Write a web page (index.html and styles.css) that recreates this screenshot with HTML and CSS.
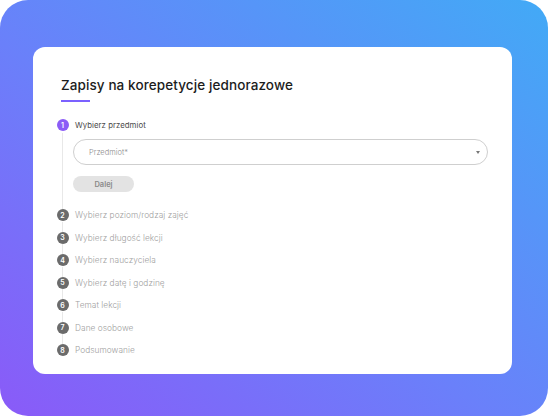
FILE: index.html
```html
<!DOCTYPE html>
<html lang="pl">
<head>
<meta charset="utf-8">
<link rel="stylesheet" href="styles.css">
</head>
<body>
<div class="frame">
  <div class="card">
    <h1 class="title">Zapisy na korepetycje jednorazowe</h1>
    <div class="title-bar"></div>
    <ol class="steps">
      <li class="step active">
        <div class="step-head"><span class="num">1</span><span class="label">Wybierz przedmiot</span></div>
        <div class="step-body">
          <div class="select">
            <span class="placeholder">Przedmiot*</span>
            <span class="caret"></span>
          </div>
          <button class="btn">Dalej</button>
        </div>
      </li>
      <li class="step"><div class="step-head"><span class="num">2</span><span class="label">Wybierz poziom/rodzaj zajęć</span></div><div class="connector"></div></li>
      <li class="step"><div class="step-head"><span class="num">3</span><span class="label">Wybierz długość lekcji</span></div><div class="connector"></div></li>
      <li class="step"><div class="step-head"><span class="num">4</span><span class="label">Wybierz nauczyciela</span></div><div class="connector"></div></li>
      <li class="step"><div class="step-head"><span class="num">5</span><span class="label">Wybierz datę i godzinę</span></div><div class="connector"></div></li>
      <li class="step"><div class="step-head"><span class="num">6</span><span class="label">Temat lekcji</span></div><div class="connector"></div></li>
      <li class="step"><div class="step-head"><span class="num">7</span><span class="label">Dane osobowe</span></div><div class="connector"></div></li>
      <li class="step"><div class="step-head"><span class="num">8</span><span class="label">Podsumowanie</span></div></li>
    </ol>
  </div>
</div>
</body>
</html>
```
FILE: styles.css
```css
* { box-sizing: border-box; }
html, body { margin: 0; padding: 0; background: #fff; }
body { font-family: "Inter", "Open Sans", sans-serif; }
.frame {
  width: 548px;
  height: 416px;
  border-radius: 28px;
  background: linear-gradient(to top right, #8a5af8 0%, #6a80fa 45%, #42aaf6 100%);
  padding: 47px 36px 42px 33px;
}
.card {
  background: #fff;
  border-radius: 12px;
  height: 100%;
  padding: 28px 24px 0 28px;
}
.title {
  margin: 0;
  font-family: "Inter", sans-serif;
  font-weight: 500;
  font-size: 13.5px;
  line-height: 20px;
  color: #1c1c1c;
  letter-spacing: 0.1px;
}
.title-bar {
  width: 29px;
  height: 2px;
  background: #7b61ff;
  margin-top: 5px;
}
.steps { list-style: none; margin: 17px 0 0 0; padding: 0; }
.step-head { display: flex; align-items: center; height: 12px; }
.num {
  width: 12px; height: 12px; border-radius: 50%;
  background: #6b6b6b; color: #fff;
  font-size: 7px; font-weight: 600;
  display: flex; align-items: center; justify-content: center;
  margin-left: -4.5px;
}
.active .num { background: #8b5cf6; }
.label { margin-left: 6.5px; font-size: 8.3px; font-weight: 300; color: #a0a0a0; letter-spacing: 0.05px; }
.active .label { color: #4a4a4a; font-size: 7.8px; font-weight: 400; }
.step-body {
  margin-left: 1px;
  border-left: 1px solid #e8e8e8;
  padding: 6px 0 17px 10px;
  margin-top: 2px;
}
.connector { margin-left: 1px; border-left: 1px solid #e8e8e8; height: 10px; margin-top: 0.5px; }
.select {
  height: 26px;
  border: 1px solid #cfcfcf;
  border-radius: 13px;
  display: flex; align-items: center; justify-content: space-between;
  padding: 0 7px 0 15px;
}
.placeholder { font-size: 7.5px; color: #8a8a8a; font-weight: 300; }
.caret {
  width: 0; height: 0;
  border-left: 2.5px solid transparent; border-right: 2.5px solid transparent;
  border-top: 3px solid #777;
}
.btn {
  margin-top: 11px;
  width: 61px; height: 16px;
  border: none; border-radius: 8px;
  background: #e3e3e3; color: #8a8a8a;
  font-family: "Inter", sans-serif; font-size: 7.5px; font-weight: 600;
  padding: 0; display: block;
}
```
